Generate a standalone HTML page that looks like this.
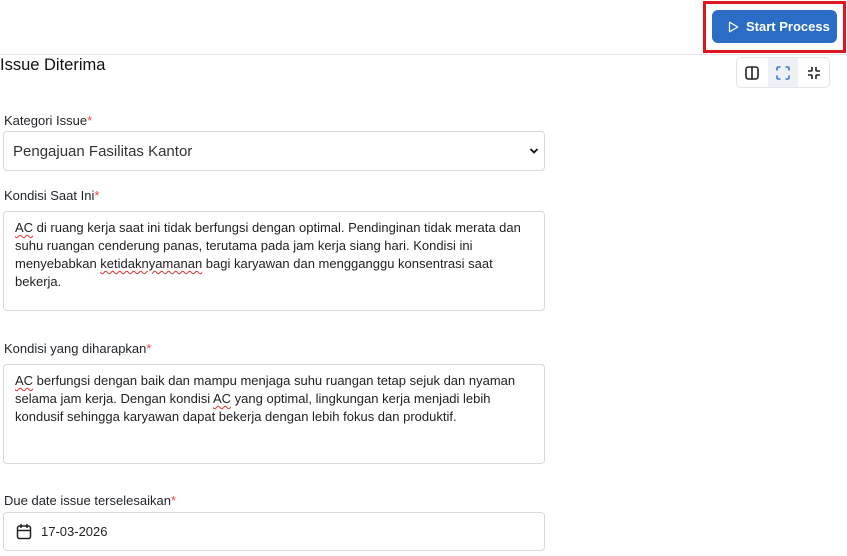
<!DOCTYPE html>
<html><head><style>
*{box-sizing:border-box;margin:0;padding:0}
body{width:847px;height:556px;overflow:hidden;background:#fff;font-family:"Liberation Sans",sans-serif;color:#1f2328;position:relative}
.a{position:absolute}
.lbl{font-size:13px;color:#1f2328}
.lbl i{color:#e5484d;font-style:normal}
.box{border:1px solid #d6d9de;border-radius:4px;background:#fff}
.ta{font-size:13px;line-height:18px;padding:7px 11px;color:#222}
.w{text-decoration:underline wavy #e03030;text-decoration-thickness:1px;text-underline-offset:2px}
</style></head><body>
<div class="a" style="left:0;top:54px;width:847px;height:1px;background:#e3e5e8"></div>
<div class="a" style="left:703px;top:1px;width:143px;height:52px;border:3px solid #e0161e"></div>
<div class="a" style="left:712px;top:10px;width:125px;height:33px;background:#2b6cc4;border-radius:6px;color:#fff;font-size:13px;font-weight:600;display:flex;align-items:center;padding-left:16px">
<svg width="11" height="12" viewBox="0 0 11 12" style="margin-right:7px"><path d="M1.5 1.2 L9.8 6 L1.5 10.8 Z" fill="none" stroke="#fff" stroke-width="1.2" stroke-linejoin="round"/></svg>Start Process</div>
<div class="a" style="left:0;top:56px;font-size:16.5px;color:#111">Issue Diterima</div>
<div class="a" style="left:736px;top:57px;width:94px;height:31px;border:1px solid #e3e5e8;border-radius:5px;display:flex;overflow:hidden">
<div style="width:31px;display:flex;align-items:center;justify-content:center"><svg width="14" height="14" viewBox="0 0 14 14"><rect x="1" y="1" width="12" height="12" rx="2.5" fill="none" stroke="#222" stroke-width="1.6"/><path d="M7 1v12" stroke="#222" stroke-width="1.6"/></svg></div>
<div style="width:31px;background:#edf1f7;display:flex;align-items:center;justify-content:center"><svg width="14" height="14" viewBox="0 0 14 14" fill="none" stroke="#3a78c8" stroke-width="1.6"><path d="M1 4.5V2.5Q1 1 2.5 1H4.5M9.5 1h2Q13 1 13 2.5v2M13 9.5v2Q13 13 11.5 13h-2M4.5 13h-2Q1 13 1 11.5v-2"/></svg></div>
<div style="width:31px;display:flex;align-items:center;justify-content:center"><svg width="14" height="14" viewBox="0 0 14 14" fill="none" stroke="#222" stroke-width="1.6"><path d="M5 1v3Q5 5 4 5H1M9 1v3Q9 5 10 5h3M13 9h-3Q9 9 9 10v3M1 9h3Q5 9 5 10v3"/></svg></div>
</div>
<div class="a lbl" style="left:4px;top:113px">Kategori Issue<i>*</i></div>
<div class="a box" style="left:3px;top:131px;width:542px;height:40px;font-size:15px;padding:11px 9px;color:#333">Pengajuan Fasilitas Kantor
<svg class="a" style="right:5px;top:15px" width="10" height="8" viewBox="0 0 10 8"><path d="M1.5 2l3.5 3.5L8.5 2" fill="none" stroke="#111" stroke-width="1.8"/></svg></div>
<div class="a lbl" style="left:4px;top:188px">Kondisi Saat Ini<i>*</i></div>
<div class="a box ta" style="left:3px;top:211px;width:542px;height:100px"><span class="w">AC</span> di ruang kerja saat ini tidak berfungsi dengan optimal. Pendinginan tidak merata dan suhu ruangan cenderung panas, terutama pada jam kerja siang hari. Kondisi ini menyebabkan <span class="w">ketidaknyamanan</span> bagi karyawan dan mengganggu konsentrasi saat bekerja.</div>
<div class="a lbl" style="left:4px;top:341px">Kondisi yang diharapkan<i>*</i></div>
<div class="a box ta" style="left:3px;top:364px;width:542px;height:100px"><span class="w">AC</span> berfungsi dengan baik dan mampu menjaga suhu ruangan tetap sejuk dan nyaman selama jam kerja. Dengan kondisi <span class="w">AC</span> yang optimal, lingkungan kerja menjadi lebih kondusif sehingga karyawan dapat bekerja dengan lebih fokus dan produktif.</div>
<div class="a lbl" style="left:4px;top:493px">Due date issue terselesaikan<i>*</i></div>
<div class="a box" style="left:3px;top:512px;width:542px;height:39px;font-size:13px;padding:11px 0 0 37px;color:#222">17-03-2026
<svg class="a" style="left:12px;top:10px" width="16" height="17" viewBox="0 0 16 17" fill="none" stroke="#222" stroke-width="1.5"><rect x="1.5" y="3" width="13" height="12.5" rx="2"/><path d="M1.5 7.5h13M5 1v4M11 1v4"/></svg></div>
</body></html>
